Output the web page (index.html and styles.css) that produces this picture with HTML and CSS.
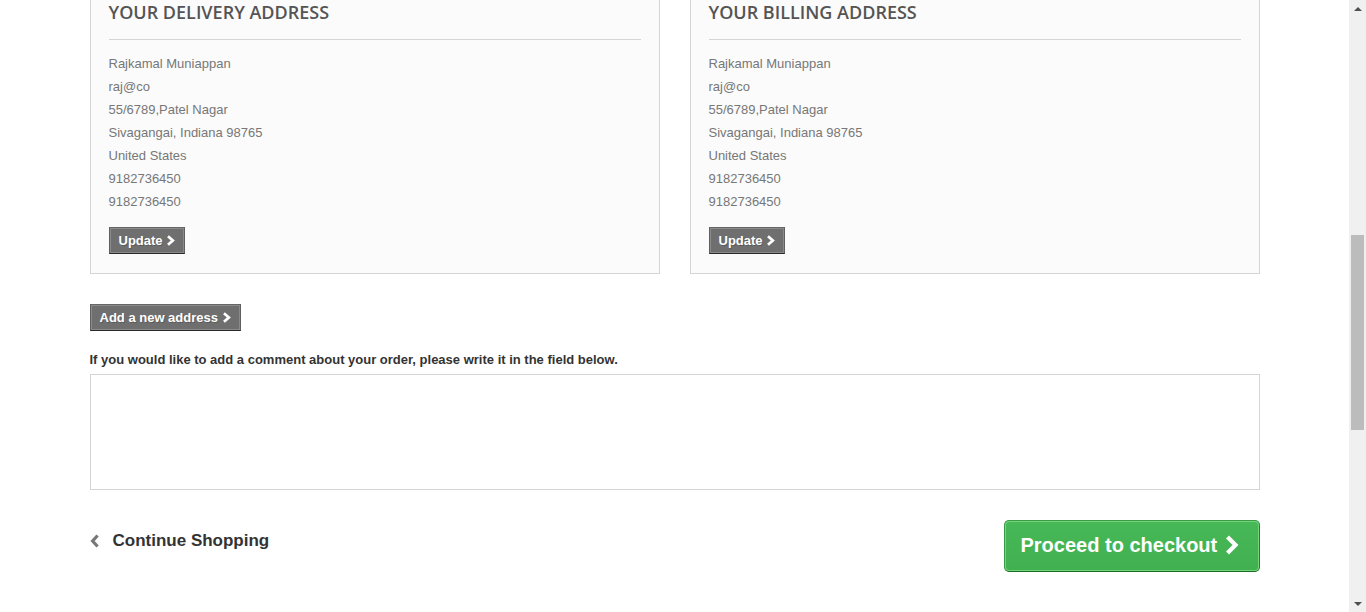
FILE: index.html
```html
<!DOCTYPE html>
<html lang="en">
<head>
<meta charset="utf-8">
<title>Addresses</title>
<link rel="stylesheet" href="styles.css">
</head>
<body>
<div class="window">
<div class="viewport">
<div class="page">
  <div class="addresses">
    <ul class="address">
      <li class="address-title">Your delivery address</li>
      <li>Rajkamal Muniappan</li>
      <li>raj@co</li>
      <li>55/6789,Patel Nagar</li>
      <li>Sivagangai, Indiana 98765</li>
      <li>United States</li>
      <li>9182736450</li>
      <li>9182736450</li>
      <li class="address-update">
        <a class="btn-small" href="#"><span>Update <svg class="chev" viewBox="0 0 10 12" width="9" height="11"><path d="M2.2 1.2 L7.6 6 L2.2 10.8" fill="none" stroke="#fff" stroke-width="3"/></svg></span></a>
      </li>
    </ul>
    <ul class="address">
      <li class="address-title">Your billing address</li>
      <li>Rajkamal Muniappan</li>
      <li>raj@co</li>
      <li>55/6789,Patel Nagar</li>
      <li>Sivagangai, Indiana 98765</li>
      <li>United States</li>
      <li>9182736450</li>
      <li>9182736450</li>
      <li class="address-update">
        <a class="btn-small" href="#"><span>Update <svg class="chev" viewBox="0 0 10 12" width="9" height="11"><path d="M2.2 1.2 L7.6 6 L2.2 10.8" fill="none" stroke="#fff" stroke-width="3"/></svg></span></a>
      </li>
    </ul>
  </div>

  <p class="add-address"><a class="btn-small" href="#"><span>Add a new address <svg class="chev" viewBox="0 0 10 12" width="9" height="11"><path d="M2.2 1.2 L7.6 6 L2.2 10.8" fill="none" stroke="#fff" stroke-width="3"/></svg></span></a></p>

  <div class="comment">
    <label for="message">If you would like to add a comment about your order, please write it in the field below.</label>
    <textarea id="message" class="comment-field"></textarea>
  </div>

  <div class="cart-nav">
    <a class="continue" href="#"><svg class="chev-left" viewBox="0 0 10 14" width="10" height="14"><path d="M7.6 1.5 L2.6 7 L7.6 12.5" fill="none" stroke="#777" stroke-width="3.2"/></svg>Continue Shopping</a>
    <a class="checkout" href="#"><span>Proceed to checkout <svg class="chev-big" viewBox="0 0 16 20" width="16" height="20"><path d="M3.5 2 L11.5 10 L3.5 18" fill="none" stroke="#fff" stroke-width="4.2"/></svg></span></a>
  </div>
</div>
</div>
<div class="scrollbar">
  <span class="arrow arrow-up"></span>
  <div class="track"><span class="thumb"></span></div>
  <span class="arrow arrow-down"></span>
</div>
</div>
</body>
</html>
```
FILE: styles.css
```css
html, body {
  margin: 0;
  padding: 0;
  background: #fff;
}
body {
  font-family: Arial, "Liberation Sans", Helvetica, sans-serif;
  font-size: 13px;
  color: #777;
}
.window {
  display: flex;
  height: 612px;
  overflow: hidden;
}
.viewport {
  flex: 1;
  min-width: 0;
  overflow: hidden;
}
.page {
  width: 1170px;
  margin: -15px auto 0;
}
.addresses {
  display: grid;
  grid-template-columns: 570px 570px;
  column-gap: 30px;
}
ul.address {
  list-style: none;
  margin: 0;
  padding: 15px 18px 19px;
  background: #fbfbfb;
  border: 1px solid #d6d4d4;
  line-height: 23px;
}
.address-title {
  font-family: "Open Sans", sans-serif;
  font-weight: 600;
  font-size: 18px;
  line-height: 22px;
  color: #555454;
  text-transform: uppercase;
  padding-bottom: 16px;
  border-bottom: 1px solid #d6d4d4;
  margin-bottom: 12px;
}
.address-update {
  margin-top: 14px;
  line-height: 0;
}
.btn-small {
  display: inline-block;
  background: #6f6f6f;
  border: 1px solid;
  border-color: #666 #5f5f5f #292929 #5f5f5f;
  color: #fff;
  text-decoration: none;
  font-weight: bold;
  font-size: 13px;
  line-height: 17px;
  text-shadow: 1px 1px rgba(0,0,0,0.2);
}
.btn-small span {
  display: block;
  border: 1px solid #8b8a8a;
  padding: 3px 8px 3px 8px;
}
.chev {
  vertical-align: -1px;
}
.add-address {
  margin: 30px 0 0;
}
.comment {
  margin-top: 20px;
}
.comment label {
  display: block;
  font-weight: bold;
  color: #333;
  line-height: 18px;
  margin-bottom: 5px;
}
.comment-field {
  display: block;
  box-sizing: border-box;
  width: 100%;
  height: 116px;
  margin: 0;
  border: 1px solid #d6d4d4;
  background: #fff;
  resize: none;
}
.cart-nav {
  display: flex;
  justify-content: space-between;
  align-items: flex-start;
  margin-top: 30px;
}
.continue {
  display: flex;
  align-items: center;
  margin-top: 11px;
  color: #333;
  font-weight: bold;
  font-size: 17px;
  line-height: 19px;
  text-decoration: none;
}
.chev-left {
  margin-right: 13px;
}
.checkout {
  display: block;
  width: 256px;
  box-sizing: border-box;
  background: linear-gradient(#47b857, #41b050);
  border: 1px solid;
  border-color: #399a49 #247f32 #1a6d27 #399a49;
  border-radius: 5px;
  color: #fff;
  text-decoration: none;
  font-weight: bold;
  font-size: 20px;
  line-height: 24px;
}
.checkout span {
  display: flex;
  align-items: center;
  border: 1px solid #74d578;
  border-radius: 4px;
  padding: 11px 15px 13px 15px;
  white-space: nowrap;
}
.chev-big {
  margin-left: 7px;
}
.scrollbar {
  width: 17px;
  flex: none;
  display: flex;
  flex-direction: column;
  background: #f0f0f0;
}
.arrow {
  height: 17px;
  flex: none;
  display: flex;
  align-items: center;
  justify-content: center;
}
.arrow::before {
  content: "";
  border-left: 4px solid transparent;
  border-right: 4px solid transparent;
}
.arrow-up::before {
  border-bottom: 4px solid #505050;
}
.arrow-down::before {
  border-top: 4px solid #505050;
}
.track {
  flex: 1;
  padding-top: 218px;
}
.thumb {
  display: block;
  margin: 0 2px;
  height: 195px;
  background: #bcbcbc;
}
```
